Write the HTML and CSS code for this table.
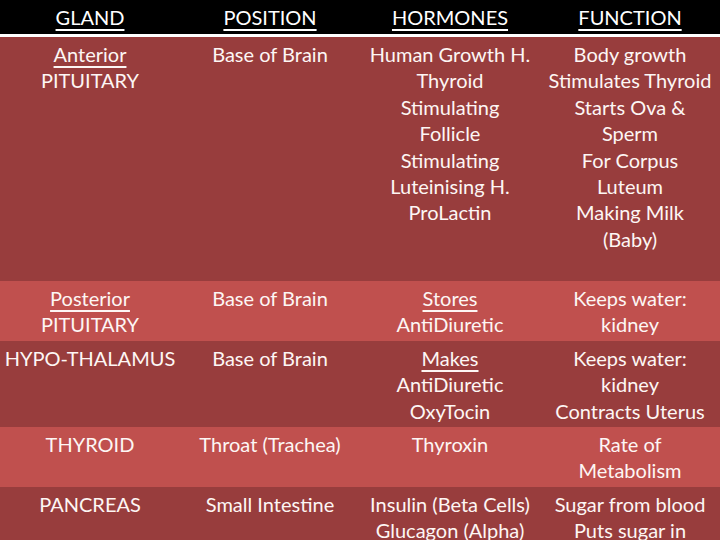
FILE: index.html
```html
<!DOCTYPE html>
<html>
<head>
<meta charset="utf-8">
<link rel="stylesheet" href="styles.css">
</head>
<body>
<table class="glands">
  <thead>
    <tr class="head">
      <th><u>GLAND</u></th>
      <th><u>POSITION</u></th>
      <th><u>HORMONES</u></th>
      <th><u>FUNCTION</u></th>
    </tr>
  </thead>
  <tbody>
    <tr class="dark tall">
      <td><u>Anterior</u><br>PITUITARY</td>
      <td>Base of Brain</td>
      <td>Human Growth H.<br>Thyroid<br>Stimulating<br>Follicle<br>Stimulating<br>Luteinising H.<br>ProLactin</td>
      <td>Body growth<br>Stimulates Thyroid<br>Starts Ova &amp;<br>Sperm<br>For Corpus<br>Luteum<br>Making Milk<br>(Baby)</td>
    </tr>
    <tr class="light">
      <td><u>Posterior</u><br>PITUITARY</td>
      <td>Base of Brain</td>
      <td><u>Stores</u><br>AntiDiuretic</td>
      <td>Keeps water:<br>kidney</td>
    </tr>
    <tr class="dark">
      <td>HYPO-THALAMUS</td>
      <td>Base of Brain</td>
      <td><u>Makes</u><br>AntiDiuretic<br>OxyTocin</td>
      <td>Keeps water:<br>kidney<br>Contracts Uterus</td>
    </tr>
    <tr class="light">
      <td>THYROID</td>
      <td>Throat (Trachea)</td>
      <td>Thyroxin</td>
      <td>Rate of<br>Metabolism</td>
    </tr>
    <tr class="dark">
      <td>PANCREAS</td>
      <td>Small Intestine</td>
      <td>Insulin (Beta Cells)<br>Glucagon (Alpha)</td>
      <td>Sugar from blood<br>Puts sugar in</td>
    </tr>
  </tbody>
</table>
</body>
</html>
```
FILE: styles.css
```css
html, body {
  margin: 0;
  padding: 0;
  background: #983d3d;
  width: 720px;
  height: 540px;
  overflow: hidden;
}
.glands {
  width: 720px;
  border-collapse: collapse;
  table-layout: fixed;
  font-family: Lato, "Open Sans", sans-serif;
  font-size: 20px;
  line-height: 26.4px;
  color: #fdf6f4;
}
.glands th, .glands td {
  padding: 4px 0 3px;
  text-align: center;
  vertical-align: top;
  font-weight: normal;
}
.glands u {
  text-decoration-thickness: 2px;
  text-underline-offset: 4px;
}
.head th {
  background: #000;
  height: 34px;
  padding: 0;
  vertical-align: middle;
  color: #fff;
  border-bottom: 3px solid #fff;
}
.dark { background: #983d3d; }
.light { background: #c0504e; }
.tall td { height: 237px; }
```
